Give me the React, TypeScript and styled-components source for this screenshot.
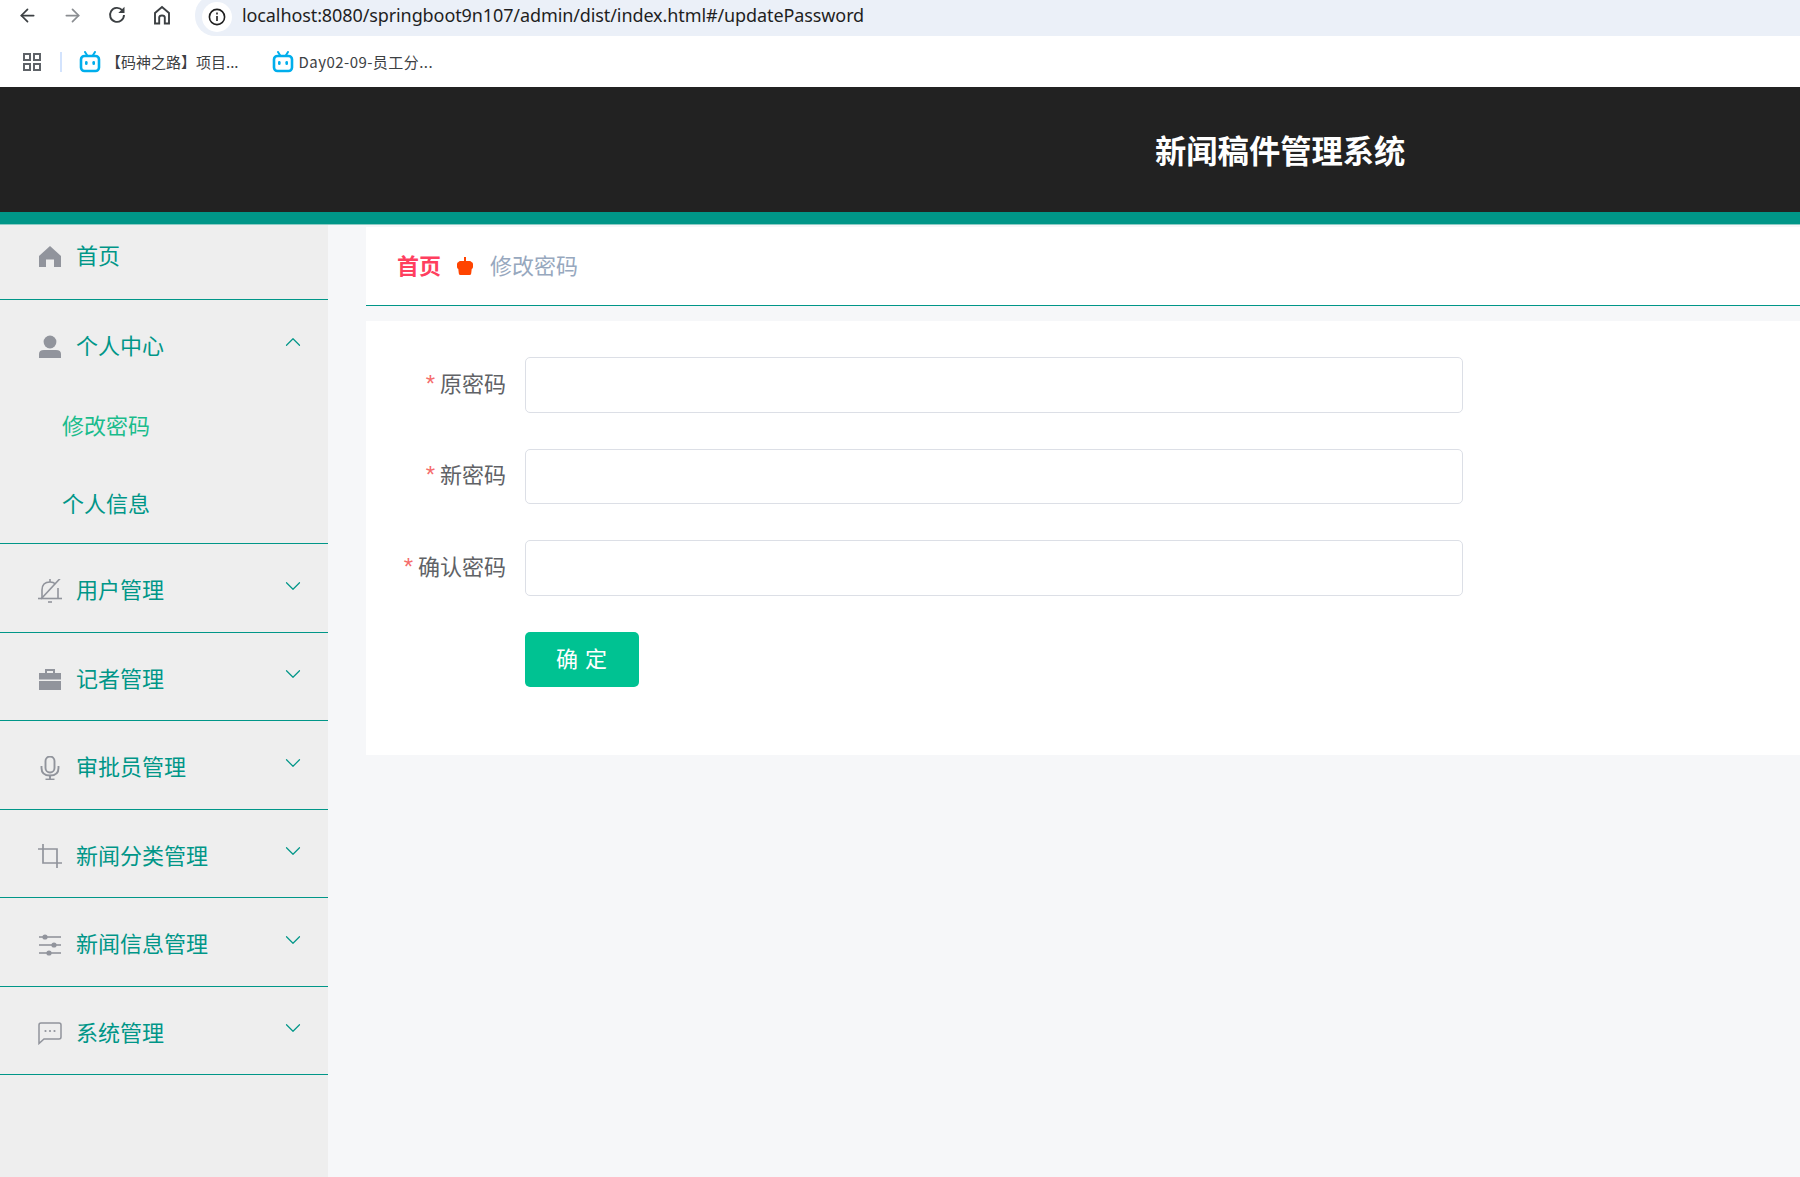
import React, { FC, ReactNode } from 'react';
import styled, { createGlobalStyle } from 'styled-components';
import { ArrowLeft, ArrowRight, ChevronDown, ChevronUp } from 'lucide-react';

const CJK = '"Noto Sans CJK SC", "Noto Sans", sans-serif';

const GlobalStyle = createGlobalStyle`
  html, body {
    margin: 0;
    padding: 0;
    background: #f6f7f9;
  }
  * {
    box-sizing: border-box;
  }
  #root {
    width: 1800px;
    height: 1177px;
    overflow: hidden;
    font-family: ${CJK};
  }
`;

const StPage = styled.div`
  display: flex;
  flex-direction: column;
  width: 1800px;
  height: 1177px;
`;

const StToolbar = styled.div`
  display: flex;
  align-items: flex-start;
  height: 36px;
  background: #fff;
`;

const StNavButtons = styled.div`
  display: flex;
  align-items: center;
  gap: 23px;
  width: 195px;
  height: 30px;
  padding-left: 16px;
`;

const StNavIcon = styled.span<{ $muted?: boolean }>`
  display: inline-flex;
  width: 22px;
  justify-content: center;
  color: ${({ $muted }) => ($muted ? '#8a8d91' : '#3c4043')};
`;

const StAddress = styled.div`
  flex: 1;
  display: flex;
  align-items: center;
  height: 41px;
  margin-top: -5px;
  padding: 0 0 1px 7px;
  gap: 10px;
  background: #ebf0f8;
  border-radius: 20px 0 0 20px;
`;

const StInfoBadge = styled.span`
  display: inline-flex;
  align-items: center;
  justify-content: center;
  width: 30px;
  height: 30px;
  margin-top: 3px;
  border-radius: 50%;
  background: #fff;
  color: #1f1f1f;
`;

const StUrl = styled.span`
  font-family: 'Noto Sans', sans-serif;
  font-size: 18px;
  letter-spacing: -0.1px;
  color: #1f1f1f;
`;

const StBookmarks = styled.div`
  display: flex;
  align-items: center;
  height: 51px;
  padding: 0 0 0 23px;
  background: #fff;
  font-size: 15px;
  color: #3c4043;
`;

const StSeparator = styled.span`
  width: 2px;
  height: 20px;
  margin: 0 17px 0 19px;
  background: #d3e3fd;
`;

const StBookmark = styled.span<{ $wide?: boolean }>`
  display: inline-flex;
  align-items: center;
  gap: 5px;
  margin-right: 33px;
  letter-spacing: ${({ $wide }) => ($wide ? '0.45px' : '0')};
`;

const StHeader = styled.header`
  display: flex;
  align-items: center;
  height: 137px;
  padding: 0 0 0 1155px;
  background: #222;
  border-bottom: 12px solid #009688;
`;

const StTitle = styled.h1`
  margin: 0;
  font-size: 31.3px;
  font-weight: 700;
  color: #fff;
`;

const StBody = styled.div`
  flex: 1;
  display: flex;
  min-height: 0;
  border-top: 1px solid #8ccbc4;
`;

const StSidebar = styled.nav`
  width: 328px;
  flex-shrink: 0;
  background: #eee;
`;

const StGroup = styled.div`
  border-bottom: 1px solid #009688;
`;

const StRow = styled.div<{ $home?: boolean }>`
  display: flex;
  align-items: center;
  height: ${({ $home }) => ($home ? '74px' : '87.5px')};
  padding: ${({ $home }) => ($home ? '0 22px 12px 38px' : '6px 22px 0 38px')};
  font-size: 22px;
  color: #009688;
`;

const StRowIcon = styled.span`
  display: inline-flex;
  width: 24px;
  height: 24px;
  margin-right: 14px;
  color: #91949c;
`;

const StRowText = styled.span`
  flex: 1;
  padding-bottom: 5px;
`;

const StArrow = styled.span`
  display: inline-flex;
  margin-top: -10px;
  color: #009688;
`;

const StSubRow = styled.div<{ $active?: boolean }>`
  display: flex;
  align-items: center;
  height: 77.75px;
  padding: 0 0 4px 62px;
  font-size: 22px;
  color: ${({ $active }) => ($active ? '#1abc8c' : '#009688')};
`;

const StMain = styled.main`
  flex: 1;
  margin-left: 38px;
  padding-top: 2px;
`;

const StCrumbs = styled.div`
  display: flex;
  align-items: center;
  height: 79px;
  padding-left: 31px;
  background: #fff;
  border-bottom: 1px solid #009688;
  font-size: 22px;
`;

const StCrumbHome = styled.span`
  padding-bottom: 5px;
  font-weight: 700;
  color: #ff3f5f;
`;

const StCrumbSep = styled.span`
  display: inline-flex;
  margin: 0 17px 0 16px;
`;

const StCrumbCurrent = styled.span`
  padding-bottom: 5px;
  color: #97a8be;
`;

const StCard = styled.section`
  height: 434px;
  margin-top: 15px;
  padding-top: 36px;
  background: #fff;
`;

const StForm = styled.form`
  display: flex;
  flex-direction: column;
  gap: 36px;
`;

const StField = styled.div`
  display: grid;
  grid-template-columns: 140px 938px;
  column-gap: 19px;
  align-items: center;
`;

const StLabel = styled.label`
  padding-bottom: 6px;
  text-align: right;
  font-size: 22px;
  color: #606266;
`;

const StStar = styled.span`
  margin-right: 5px;
  font-family: 'Liberation Sans', sans-serif;
  font-size: 24px;
  color: #f56c6c;
`;

const StInput = styled.input`
  display: block;
  width: 100%;
  height: 55.5px;
  padding: 0 17px;
  background: #fff;
  border: 1px solid #dcdfe6;
  border-radius: 5px;
  outline: none;
`;

const StSubmit = styled.button`
  grid-column: 2;
  width: 114px;
  height: 55px;
  padding: 0 0 5px;
  background: #00c292;
  border: none;
  border-radius: 5px;
  font-family: ${CJK};
  font-size: 22px;
  letter-spacing: 1px;
  color: #fff;
  white-space: pre;
`;

const Icon: FC<{ children: ReactNode }> = ({ children }) => (
  <svg width="24" height="24" viewBox="0 0 24 24">
    {children}
  </svg>
);

const HomeIcon = () => (
  <Icon>
    <path d="M12 2 L23 12 V23 H16 V15.5 H8 V23 H1 V12 Z" fill="currentColor" />
  </Icon>
);

const UserIcon = () => (
  <Icon>
    <circle cx="12" cy="7" r="6.4" fill="currentColor" />
    <path d="M1 23 V19 Q1 15 6 15 H18 Q23 15 23 19 V23 Z" fill="currentColor" />
  </Icon>
);

const BellOffIcon = () => (
  <Icon>
    <g fill="none" stroke="currentColor" strokeWidth="1.6">
      <path d="M0 19.5 H24" />
      <path d="M4 19.5 V11 Q4 3 12 3 Q15.5 3 17.5 5" />
      <path d="M20 9 V19.5" />
      <path d="M22.5 -1 L3 20" />
      <path d="M10 23 H14" />
      <path d="M12 3 V0" />
    </g>
  </Icon>
);

const BriefcaseIcon = () => (
  <Icon>
    <path d="M7 6 V2 H17 V6 H15 V4 H9 V6 Z" fill="currentColor" />
    <rect x="1" y="6" width="22" height="6.5" fill="currentColor" />
    <rect x="1" y="14" width="22" height="9" fill="currentColor" />
  </Icon>
);

const MicIcon = () => (
  <Icon>
    <g fill="none" stroke="currentColor" strokeWidth="1.9">
      <rect x="7.5" y="0.5" width="9" height="16" rx="4.5" />
      <path d="M3.5 10 V12 Q3.5 19.5 12 19.5 Q20.5 19.5 20.5 12 V10" />
      <path d="M12 19.5 V23.5" />
      <path d="M7.5 23.5 H16.5" />
    </g>
  </Icon>
);

const CropIcon = () => (
  <Icon>
    <g fill="none" stroke="currentColor" strokeWidth="1.7">
      <path d="M5 0 V19 H24" />
      <path d="M0 5 H19 V24" />
    </g>
  </Icon>
);

const SlidersIcon = () => (
  <Icon>
    <g stroke="currentColor" strokeWidth="1.6">
      <path d="M1 4 H23" />
      <path d="M1 12 H23" />
      <path d="M1 20 H23" />
    </g>
    <circle cx="7" cy="4" r="2.6" fill="currentColor" />
    <circle cx="16" cy="12" r="2.6" fill="currentColor" />
    <circle cx="11" cy="20" r="2.6" fill="currentColor" />
  </Icon>
);

const ChatIcon = () => (
  <Icon>
    <path
      d="M1 22.5 V4 Q1 2 3 2 H21 Q23 2 23 4 V16 Q23 18 21 18 H6 Z"
      fill="none"
      stroke="currentColor"
      strokeWidth="1.5"
    />
    <circle cx="7.5" cy="10" r="1.1" fill="currentColor" />
    <circle cx="12" cy="10" r="1.1" fill="currentColor" />
    <circle cx="16.5" cy="10" r="1.1" fill="currentColor" />
  </Icon>
);

const CrownIcon = () => (
  <svg width="16" height="18" viewBox="0 0 16 18">
    <path
      d="M7 0 H9 V4 H12.5 Q14 4 14.5 5 Q16 5.3 16 7 V10 Q16 11.5 14.7 12 L14.2 16.5 Q14 18 12.5 18 H3.5 Q2 18 1.8 16.5 L1.3 12 Q0 11.5 0 10 V7 Q0 5.3 1.5 5 Q2 4 3.5 4 H7 Z"
      fill="#ff4400"
    />
  </svg>
);

const BiliIcon = () => (
  <svg width="22" height="22" viewBox="0 0 22 22">
    <path d="M6 1 L8.5 5 M16 1 L13.5 5" stroke="#00aeec" strokeWidth="2" strokeLinecap="round" />
    <rect x="2" y="5" width="18" height="15" rx="3.5" fill="#fff" stroke="#00aeec" strokeWidth="2.6" />
    <rect x="6" y="10" width="2.6" height="4" rx="1.3" fill="#00aeec" />
    <rect x="13.4" y="10" width="2.6" height="4" rx="1.3" fill="#00aeec" />
  </svg>
);

const AppsIcon = () => (
  <svg width="18" height="18" viewBox="0 0 18 18" fill="none" stroke="#5f6368" strokeWidth="2">
    <rect x="1" y="1" width="6" height="6" />
    <rect x="11" y="1" width="6" height="6" />
    <rect x="1" y="11" width="6" height="6" />
    <rect x="11" y="11" width="6" height="6" />
  </svg>
);

const InfoIcon = () => (
  <svg width="18" height="18" viewBox="0 0 18 18" fill="none" stroke="currentColor" strokeWidth="1.6">
    <circle cx="9" cy="9" r="7.6" />
    <path d="M9 8 V13" />
    <path d="M9 4.6 V6.4" />
  </svg>
);

const ReloadIcon = () => (
  <svg width="20" height="20" viewBox="0 0 20 20">
    <path d="M15.2 5.2 A7 7 0 1 0 17 10" fill="none" stroke="currentColor" strokeWidth="1.9" />
    <path d="M17.5 1.8 V8 H11.3 Z" fill="currentColor" />
  </svg>
);

const BrowserHomeIcon = () => (
  <svg width="20" height="20" viewBox="0 0 20 20" fill="none" stroke="currentColor" strokeWidth="1.9">
    <path d="M3 18.5 V8 L10 2 L17 8 V18.5 H12.8 V12.5 Q12.8 10.5 10 10.5 Q7.2 10.5 7.2 12.5 V18.5 Z" />
  </svg>
);

const navGroups = [
  { title: '用户管理', icon: <BellOffIcon /> },
  { title: '记者管理', icon: <BriefcaseIcon /> },
  { title: '审批员管理', icon: <MicIcon /> },
  { title: '新闻分类管理', icon: <CropIcon /> },
  { title: '新闻信息管理', icon: <SlidersIcon /> },
  { title: '系统管理', icon: <ChatIcon /> },
];

const fields = ['原密码', '新密码', '确认密码'];

const App: FC = () => {
  return (
    <StPage>
      <GlobalStyle />
      <StToolbar>
        <StNavButtons>
          <StNavIcon>
            <ArrowLeft size={21} strokeWidth={2} />
          </StNavIcon>
          <StNavIcon $muted>
            <ArrowRight size={21} strokeWidth={2} />
          </StNavIcon>
          <StNavIcon>
            <ReloadIcon />
          </StNavIcon>
          <StNavIcon>
            <BrowserHomeIcon />
          </StNavIcon>
        </StNavButtons>
        <StAddress>
          <StInfoBadge>
            <InfoIcon />
          </StInfoBadge>
          <StUrl>localhost:8080/springboot9n107/admin/dist/index.html#/updatePassword</StUrl>
        </StAddress>
      </StToolbar>
      <StBookmarks>
        <AppsIcon />
        <StSeparator />
        <StBookmark>
          <BiliIcon />
          【码神之路】项目...
        </StBookmark>
        <StBookmark $wide>
          <BiliIcon />
          Day02-09-员工分...
        </StBookmark>
      </StBookmarks>
      <StHeader>
        <StTitle>新闻稿件管理系统</StTitle>
      </StHeader>
      <StBody>
        <StSidebar>
          <StGroup>
            <StRow $home>
              <StRowIcon>
                <HomeIcon />
              </StRowIcon>
              <StRowText>首页</StRowText>
            </StRow>
          </StGroup>
          <StGroup>
            <StRow>
              <StRowIcon>
                <UserIcon />
              </StRowIcon>
              <StRowText>个人中心</StRowText>
              <StArrow>
                <ChevronUp size={26} strokeWidth={1.1} />
              </StArrow>
            </StRow>
            <StSubRow $active>修改密码</StSubRow>
            <StSubRow>个人信息</StSubRow>
          </StGroup>
          {navGroups.map((group) => (
            <StGroup key={group.title}>
              <StRow>
                <StRowIcon>{group.icon}</StRowIcon>
                <StRowText>{group.title}</StRowText>
                <StArrow>
                  <ChevronDown size={26} strokeWidth={1.1} />
                </StArrow>
              </StRow>
            </StGroup>
          ))}
        </StSidebar>
        <StMain>
          <StCrumbs>
            <StCrumbHome>首页</StCrumbHome>
            <StCrumbSep>
              <CrownIcon />
            </StCrumbSep>
            <StCrumbCurrent>修改密码</StCrumbCurrent>
          </StCrumbs>
          <StCard>
            <StForm>
              {fields.map((name) => (
                <StField key={name}>
                  <StLabel>
                    <StStar>*</StStar>
                    {name}
                  </StLabel>
                  <StInput type="password" />
                </StField>
              ))}
              <StField>
                <StSubmit type="button">确 定</StSubmit>
              </StField>
            </StForm>
          </StCard>
        </StMain>
      </StBody>
    </StPage>
  );
};

export default App;
